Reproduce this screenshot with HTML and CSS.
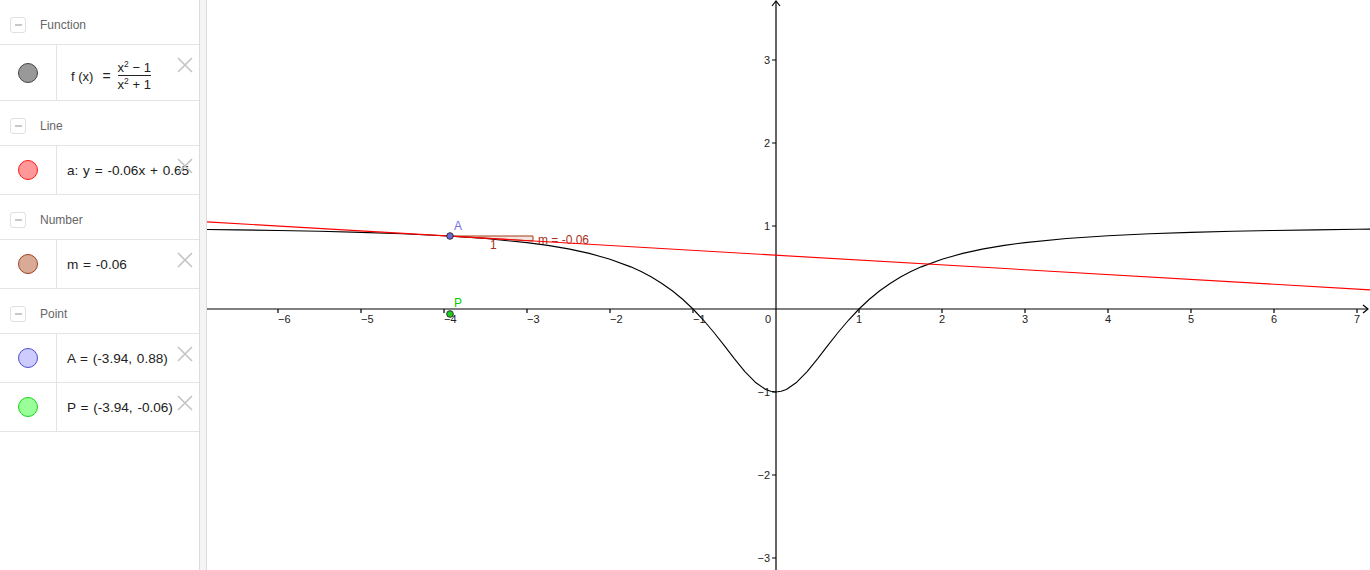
FILE: index.html
```html
<!DOCTYPE html>
<html>
<head>
<meta charset="utf-8">
<link rel="stylesheet" href="styles.css">
</head>
<body>
<div class="app">
  <div class="algebra">
    <div class="ghead"><span class="toggle"></span><span class="gtitle">Function</span></div>
    <div class="item item-tall">
      <div class="mark"><span class="dot dot-f"></span></div>
      <div class="formula">
        <span class="fx">f (x)</span><span class="feq">=</span><span class="frac"><span class="num">x<sup>2</sup> − 1</span><span class="den">x<sup>2</sup> + 1</span></span>
      </div>
      <svg class="del" viewBox="0 0 16 16"><path d="M1 1L15 15M15 1L1 15"/></svg>
    </div>

    <div class="ghead"><span class="toggle"></span><span class="gtitle">Line</span></div>
    <div class="item">
      <div class="mark"><span class="dot dot-l"></span></div>
      <div class="expr">a: y = -0.06x + 0.65</div>
      <svg class="del" viewBox="0 0 16 16"><path d="M1 1L15 15M15 1L1 15"/></svg>
    </div>

    <div class="ghead"><span class="toggle"></span><span class="gtitle">Number</span></div>
    <div class="item">
      <div class="mark"><span class="dot dot-n"></span></div>
      <div class="expr">m = -0.06</div>
      <svg class="del" viewBox="0 0 16 16"><path d="M1 1L15 15M15 1L1 15"/></svg>
    </div>

    <div class="ghead"><span class="toggle"></span><span class="gtitle">Point</span></div>
    <div class="item">
      <div class="mark"><span class="dot dot-a"></span></div>
      <div class="expr">A = (-3.94, 0.88)</div>
      <svg class="del" viewBox="0 0 16 16"><path d="M1 1L15 15M15 1L1 15"/></svg>
    </div>
    <div class="item">
      <div class="mark"><span class="dot dot-p"></span></div>
      <div class="expr">P = (-3.94, -0.06)</div>
      <svg class="del" viewBox="0 0 16 16"><path d="M1 1L15 15M15 1L1 15"/></svg>
    </div>
  </div>
  <div class="splitter"></div>
  <div class="graphics">
    <svg class="plot" width="1163" height="570" viewBox="0 0 1163 570">
      <g class="axis">
        <line x1="0" y1="309" x2="1161" y2="309"/>
        <path d="M1156 305L1161 309L1156 313" fill="none"/>
        <line x1="569" y1="1" x2="569" y2="570"/>
        <path d="M565 6L569 1L573 6" fill="none"/>
        <path d="M71 309v4M154 309v4M237 309v4M320 309v4M403 309v4M486 309v4M652 309v4M735 309v4M818 309v4M901 309v4M984 309v4M1067 309v4M1150 309v4"/>
        <path d="M565 60h4M565 143h4M565 226h4M565 392h4M565 475h4M565 558h4"/>
      </g>
      <g class="tick-labels">
        <text x="71" y="323">−6</text>
        <text x="154" y="323">−5</text>
        <text x="237" y="323">−4</text>
        <text x="320" y="323">−3</text>
        <text x="403" y="323">−2</text>
        <text x="486" y="323">−1</text>
        <text x="652" y="323" class="mid">1</text>
        <text x="735" y="323" class="mid">2</text>
        <text x="818" y="323" class="mid">3</text>
        <text x="901" y="323" class="mid">4</text>
        <text x="984" y="323" class="mid">5</text>
        <text x="1067" y="323" class="mid">6</text>
        <text x="1150" y="323" class="mid">7</text>
        <text x="564" y="323" class="end">0</text>
        <text x="563" y="64" class="end">3</text>
        <text x="563" y="147" class="end">2</text>
        <text x="563" y="230" class="end">1</text>
        <text x="563" y="396" class="end">−1</text>
        <text x="563" y="479" class="end">−2</text>
        <text x="563" y="562" class="end">−3</text>
      </g>
      <polyline class="curve" points="-1,229.46 29.5,229.83 71,230.49 112.5,231.31 154,232.38 195.5,233.81 237,235.76 278.5,238.52 320,242.6 340.75,245.39 361.5,248.9 382.25,253.38 403,259.2 423.75,266.86 434.13,271.6 444.5,277.08 454.88,283.43 465.25,290.78 475.63,299.27 486,309 496.38,320.01 506.75,332.24 517.13,345.37 527.5,358.8 537.88,371.53 548.25,382.24 558.63,389.44 563.8,391.2 569,392 574.2,391.2 579.38,389.44 589.75,382.24 600.13,371.53 610.5,358.8 620.88,345.37 631.25,332.24 641.63,320.01 652,309 662.38,299.27 672.75,290.78 683.13,283.43 693.5,277.08 703.88,271.6 714.25,266.86 735,259.2 755.75,253.38 776.5,248.9 797.25,245.39 818,242.6 859.5,238.52 901,235.76 942.5,233.81 984,232.38 1025.5,231.31 1067,230.49 1108.5,229.83 1150,229.32 1166,229.14"/>
      <path class="tri" d="M243 236H326V241Z"/>
      <text class="slope" x="283" y="249">1</text>
      <text class="slope" x="331" y="244">m = -0.06</text>
      <line class="tangent" x1="0" y1="221.9" x2="1163" y2="289.9"/>
      <circle class="pt-a" cx="243" cy="236" r="3.3"/>
      <text class="lab-a" x="247" y="230">A</text>
      <circle class="pt-p" cx="243" cy="314" r="3.3"/>
      <text class="lab-p" x="247" y="307">P</text>
    </svg>
  </div>
</div>
</body>
</html>
```

FILE: styles.css
```css
html, body {
  margin: 0;
  padding: 0;
  background: #fff;
  overflow: hidden;
}

body {
  font-family: "Liberation Sans", Arial, sans-serif;
}

.app {
  display: flex;
  height: 570px;
}

.algebra {
  width: 199px;
  border-right: 1px solid #dcdcdc;
  flex: none;
}

.splitter {
  width: 6px;
  background: #f4f4f4;
  border-right: 1px solid #dcdcdc;
  flex: none;
}

.graphics {
  flex: 1;
  overflow: hidden;
}

.ghead {
  height: 45px;
  box-sizing: border-box;
  border-bottom: 1px solid #e4e4e4;
  display: flex;
  align-items: center;
  padding-left: 10px;
  padding-top: 6px;
}

.toggle {
  width: 14px;
  height: 14px;
  border: 1px solid #e0e0e0;
  border-radius: 3px;
  position: relative;
  box-sizing: content-box;
}

.toggle::after {
  content: "";
  position: absolute;
  left: 4px;
  top: 6px;
  width: 7px;
  height: 2px;
  background: #c8c8c8;
}

.gtitle {
  margin-left: 14px;
  font-size: 12px;
  color: #666;
}

.item {
  height: 49px;
  box-sizing: border-box;
  border-bottom: 1px solid #e4e4e4;
  display: flex;
  position: relative;
}

.item-tall {
  height: 56px;
}

.mark {
  width: 56px;
  border-right: 1px solid #e4e4e4;
  display: flex;
  align-items: center;
  justify-content: center;
  flex: none;
}

.dot {
  width: 18px;
  height: 18px;
  border-radius: 50%;
  border: 1px solid #333;
}

.dot-f { background: #999; border-color: #444; }
.dot-l { background: #ff9999; border-color: #ff1a1a; }
.dot-n { background: #d9ab96; border-color: #a04020; }
.dot-a { background: #ccccff; border-color: #4d4dcc; }
.dot-p { background: #99ff99; border-color: #1ad11a; }

.expr {
  padding-left: 10px;
  align-self: center;
  font-size: 13.6px;
  color: #222;
  white-space: nowrap;
  word-spacing: 1px;
}

.formula {
  display: flex;
  align-items: center;
  padding-left: 14px;
  padding-top: 7px;
  font-size: 13px;
  color: #222;
  white-space: nowrap;
}

.feq {
  margin: 0 7px 0 9px;
  font-size: 14px;
}

.frac {
  display: inline-flex;
  flex-direction: column;
  align-items: center;
  line-height: 13px;
}

.frac sup {
  font-size: 8.5px;
  vertical-align: 5px;
  line-height: 0;
}

.num {
  padding: 0 0 1px;
  border-bottom: 1px solid #222;
}

.den {
  padding: 2px 0 0;
}

.del {
  position: absolute;
  left: 177px;
  top: 12px;
  width: 16px;
  height: 16px;
  stroke: #c4c4c4;
  stroke-width: 1.6;
  fill: none;
}

.plot {
  display: block;
}

.axis line,
.axis path {
  stroke: #000;
  stroke-width: 1.2;
}

.tick-labels text {
  font-family: "Liberation Sans", Arial, sans-serif;
  font-size: 11px;
  fill: #222;
}

.tick-labels .mid { text-anchor: middle; }
.tick-labels .end { text-anchor: end; }

.curve {
  fill: none;
  stroke: #000;
  stroke-width: 1.1;
  stroke-linejoin: round;
}

.tangent {
  stroke: #ff0000;
  stroke-width: 1.1;
}

.tri {
  fill: rgba(153, 51, 0, 0.12);
  stroke: #a33a1a;
  stroke-width: 1;
}

.slope {
  font-family: "Liberation Sans", Arial, sans-serif;
  font-size: 12px;
  fill: #a8321e;
}

.pt-a {
  fill: #6a6ad6;
  stroke: #333;
  stroke-width: 1;
}

.pt-p {
  fill: #1ad11a;
  stroke: #333;
  stroke-width: 1;
}

.lab-a {
  font-family: "Liberation Sans", Arial, sans-serif;
  font-size: 12px;
  fill: #7070e0;
}

.lab-p {
  font-family: "Liberation Sans", Arial, sans-serif;
  font-size: 12px;
  fill: #00cc00;
}
```
